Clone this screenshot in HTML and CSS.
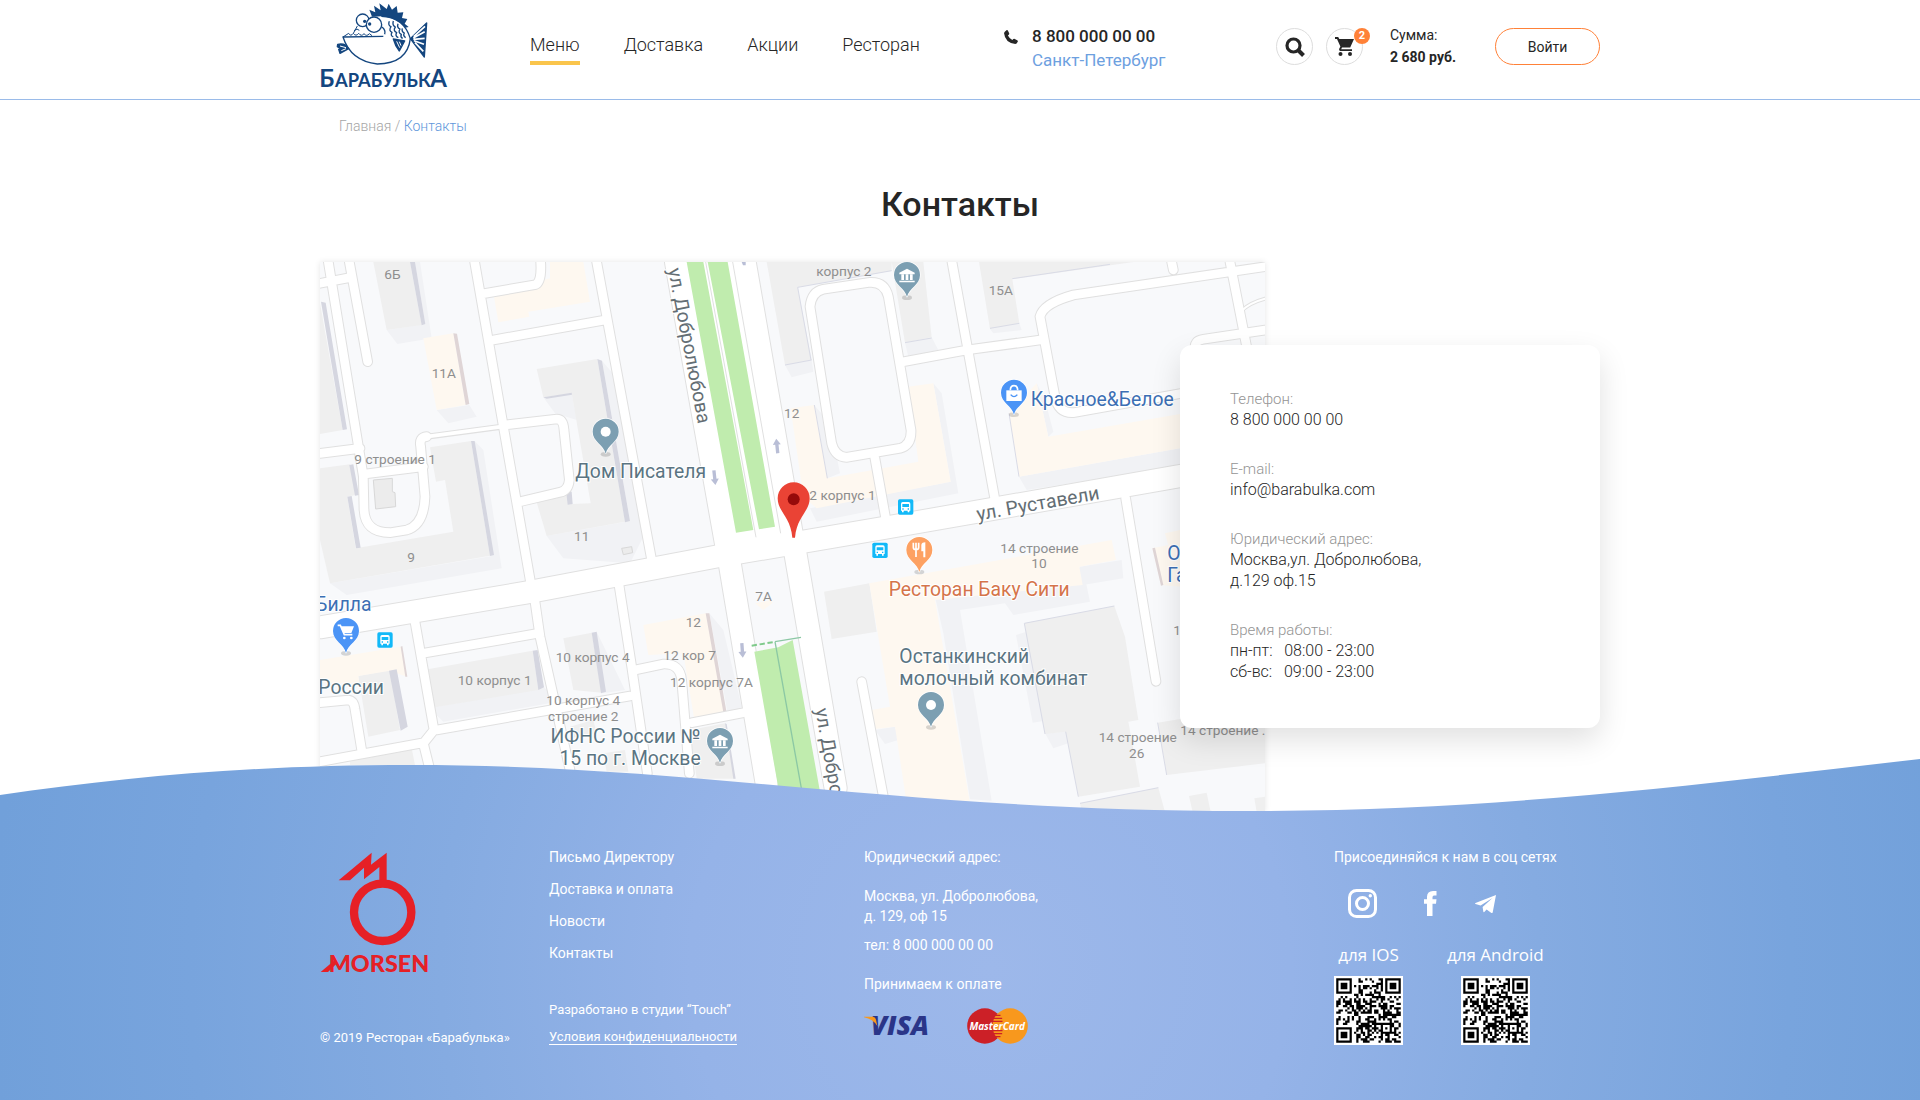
FILE: index.html
```html
<!DOCTYPE html>
<html lang="ru">
<head>
<meta charset="utf-8">
<meta name="viewport" content="width=device-width, initial-scale=1">
<title>Контакты — Барабулька</title>
<link rel="stylesheet" href="styles.css">
</head>
<body>
<header class="header">
  <div class="container header-row">
    <a class="logo" href="#" aria-label="Барабулька">
      <svg viewBox="60 10 387 255" width="129" height="85">
        <g fill="none" stroke="#14467f" stroke-width="4" stroke-linejoin="round">
          <path fill="#14467f" stroke="none" d="M216 51L208 30L226 38L222 18L242 32L238 11L260 28L266 12L276 30L290 19L293 39L310 38L306 55L322 58L314 72L326 82L316 84Q292 55 244 50Z"/>
          <path d="M244 50Q312 52 331 117Q322 192 232 193Q152 184 129 112L250 110"/>
          <path d="M129 112L146 101Q152 112 160 101Q168 112 176 101Q184 112 192 102Q200 112 208 102L216 108M160 101L172 79M162 93Q172 84 178 92" stroke-width="3"/>
          <circle cx="188" cy="62" r="19" fill="#fff"/>
          <circle cx="222" cy="75" r="23" fill="#fff"/>
          <circle cx="194" cy="65" r="5" fill="#14467f" stroke="none"/>
          <circle cx="209" cy="73" r="5" fill="#14467f" stroke="none"/>
          <path d="M331 117L380 70L373 172Z" fill="#14467f"/>
          <path d="M341 111L375 80M340 115L374 96M340 119L374 116M342 123L372 134M345 129L370 155" stroke="#fff" stroke-width="5"/>
          <path d="M113 134Q126 131 137 136L146 147L120 161L116 149L122 147L112 141Z" fill="#14467f"/>
          <path d="M120 139L138 144M124 153L138 147" stroke="#fff" stroke-width="3"/>
          <path d="M280 118L314 124L298 154Q286 140 280 118Z" fill="#14467f"/>
          <path d="M290 125L299 144M298 126L303 138" stroke="#fff" stroke-width="3"/>
          <path d="M268 65q-5 12 5 16q-8 12 3 17q-6 10 4 14M280 64q-4 13 6 18q-8 11 4 17q-6 10 5 15M294 72q-4 12 6 16q-7 11 4 16q-4 8 4 12M307 86q-3 10 6 14q-5 8 4 14M246 82Q258 92 254 104" stroke-width="4"/>
        </g>
        <g class="logo-text">
          <text x="58" y="261" class="logo-big">Б</text>
          <text x="105" y="261" class="logo-small">АРАБУЛЬК</text>
          <text x="391" y="261" class="logo-big">А</text>
        </g>
      </svg>
    </a>
    <nav class="nav">
      <a class="nav-link nav-active" href="#">Меню</a>
      <a class="nav-link" href="#">Доставка</a>
      <a class="nav-link" href="#">Акции</a>
      <a class="nav-link" href="#">Ресторан</a>
    </nav>
    <div class="phone">
      <svg class="phone-icon" viewBox="0 0 14 14" width="14" height="14"><path fill="#262626" d="M1 1.500L2.800 0L3.700.3L5.300 3.600L5 4.600L3.900 5.500Q5.300 8.400 8.300 9.900L9.300 8.900L10.300 8.700L13.600 10.600L13.900 11.600L12.600 13.400L11.300 14Q1 12.800 0 3Z"/></svg>
      <div>
        <a class="phone-number" href="tel:88000000000">8 800 000 00 00</a>
        <a class="city" href="#">Санкт-Петербург</a>
      </div>
    </div>
    <div class="actions">
      <button class="round" type="button" aria-label="Поиск">
        <svg viewBox="0 0 20 20" width="20" height="20" fill="none" stroke="#262626"><circle cx="8.500" cy="8.500" r="6.500" stroke-width="3.200"/><path d="M13 13L18.500 18.500" stroke-width="4"/></svg>
      </button>
      <button class="round" type="button" aria-label="Корзина">
        <svg viewBox="0 0 20 20" width="20" height="20" fill="#262626"><path d="M0 0H3.200L4.300 2H19L15.200 10.500H7L6.200 12.200H17V14H5Q3.600 13.400 4.200 11.800L5.400 9.600L2 2H0Z"/><circle cx="5.500" cy="17" r="2"/><circle cx="15" cy="17" r="2"/></svg>
        <span class="badge">2</span>
      </button>
      <div class="sum">Сумма:<strong>2 680 руб.</strong></div>
      <button class="login" type="button">Войти</button>
    </div>
  </div>
</header>

<main class="container">
  <nav class="crumbs"><a href="#">Главная</a> / <a class="crumb-current" href="#">Контакты</a></nav>
  <h1>Контакты</h1>
  <section class="contacts">
    <svg class="map" viewBox="30 36 2835 1650" role="img" aria-label="Карта">
      <defs>
        <path id="pin" d="M0 66C-5 40-39 30-39 0A39 39 0 1 1 39 0C39 30 5 40 0 66Z"/>
        <g id="bank" fill="#fff"><path d="M-23-7L0-19L23-7V-2H-23Z"/><path d="M-17-2h8v17h-8zM-4-2h8v17h-8zM9-2h8v17h-8zM-23 17h46v5h-46z"/></g>
        <g id="bus"><rect x="-23" y="-23" width="46" height="46" rx="5" fill="#12b9f8"/><path fill="#fff" fill-rule="evenodd" d="M-14-10Q-14-15-9-15H9Q14-15 14-10V11H11V16H6V11H-6V16H-11V11H-14ZM-10-9V0H10V-9ZM-10 4v4h4v-4zM6 4v4h4v-4z"/></g>
        <path id="arrow" d="M0-22L12-4H5V22H-5V-4H-12Z" fill="#b9bed6"/>
        <g id="streets">
          <path d="M55 36L160 680L162 780Q166 848 240 848L290 840Q342 825 345 740L332 590Q326 562 350 560M118 36L173 335M30 100L125 82M30 610L150 595M165 672L340 650"/>
          <path d="M494 36L664 1010M675 1055L690 1160L780 1560M860 36L1024 925M927 1005L965 1250L1012 1570M550 270L885 210M515 132L676 104Q696 96 692 36M585 525L740 507Q760 507 762 540L778 690Q775 722 750 727L630 755"/>
          <path d="M1500 170Q1505 125 1540 118L1680 97Q1725 95 1735 140L1803 540Q1805 585 1770 595L1610 622Q1575 620 1565 580L1500 170M1693 615L1728 810M1926 36L2055 750M1780 335L1970 300L2190 270"/>
          <path d="M2865 50L2290 135Q2200 160 2190 200L2235 440Q2245 490 2290 488L2700 415M2760 36L2810 290M2585 36L2590 60M2865 240L2680 268Q2650 272 2655 300M2447 745L2538 1294M1655 1295L1722 1650"/>
          <path d="M314 1110L372 1440L340 1480L360 1560M30 1535L340 1478M30 1358L115 1350Q132 1352 135 1378L155 1500M340 1210L685 1150M380 1440L960 1338M975 1260L1060 1242Q1110 1240 1115 1290L1138 1570M1145 1418L1300 1388"/>
        </g>
        <g id="avenues">
          <path d="M30 1132L648 1028L1228 918L1710 836L2600 680L2865 635"/>
          <path d="M1098 36L1246 870L1260 945L1370 1600M1304 36L1445 850L1457 915L1577 1615"/>
        </g>
      </defs>
      <path fill="#f8f9fb" d="M30 36H2865V1686H30Z"/>
      <g fill="#f1f2f5">
        <path d="M230 240L346 222L365 265L262 282ZM380 480L478 465L500 500L415 520ZM315 36H330L365 265L346 222ZM876 332L925 390L1000 860L960 940L760 925L710 858L960 813ZM60 1000L550 917L575 955L110 1035ZM700 442L785 430L800 510L735 490ZM494 573L520 600L575 955L540 917Z"/>
        <path d="M1425 345L1505 330L1510 365L1445 382ZM1785 278L1865 262L1885 300L1795 320ZM2040 237L2128 220L2135 240L2050 250ZM1515 468L1560 520L1590 670L1552 685ZM1870 400L1895 430L1945 730L1520 815L1500 775L1922 695ZM2180 400L2205 450L2230 545L2215 560ZM2127 680L2610 595V650L2150 720Z"/>
        <path d="M1875 1040L2318 950L2340 1055L2110 1095L2085 1060L1950 1080L2045 1652L1980 1648L1900 1150ZM1695 1440L1755 1430L1765 1470L1725 1482ZM2118 1155L2150 1145L2205 1412L2168 1418ZM2205 1450L2267 1445L2275 1480L2230 1495ZM358 1375L702 1312L745 1355L400 1415ZM860 1145L945 1320L880 1330ZM1198 1090L1240 1140L1295 1370L1255 1400ZM2310 950L2435 930L2440 985L2318 1005Z"/>
      </g>
      <g fill="#efefef">
        <path d="M190 36H300L335 225L230 240ZM30 160L98 540L30 552ZM680 357L862 327L945 815L710 858L675 740L770 720L785 762L842 760L785 430L700 442Z"/>
        <path d="M360 592L483 573L540 917L60 1000L30 870V655L120 643L137 735L112 740L137 895L430 845L405 690L378 695Z"/>
        <path d="M1370 36H1745V62L1463 112L1505 330L1425 345ZM1745 36H1840L1865 262L1785 278ZM2007 36H2470L2107 88L2128 220L2040 237Z"/>
        <path d="M1542 1025L1678 1000L1700 1145L1565 1167ZM2143 1120L2413 1068L2445 1160L2485 1410L2455 1415L2490 1610L2305 1640L2267 1445L2205 1452ZM2310 1660L2545 1613L2565 1686H2315ZM2543 1418L2865 1365V1540L2570 1575ZM2637 1638L2690 1628L2702 1686H2648ZM2833 1645L2865 1640V1686H2840Z"/>
        <path d="M760 1165L845 1148L875 1328L790 1320ZM340 1260L668 1202L685 1320L358 1375ZM145 1278L240 1260L270 1440L175 1460ZM1140 1440L1245 1420L1275 1586H1160ZM880 1510L945 1500L955 1565H890ZM120 1528L305 1495L315 1545H120ZM780 1430L850 1410L860 1450L780 1465Z"/>
      </g>
      <g fill="#fef8f0">
        <path d="M550 128L720 85V36H820L840 155L655 185L658 200L565 217Z"/>
        <path d="M340 265L430 250L467 465L380 480ZM1442 475L1513 465L1552 685L1825 635L1795 410L1870 400L1922 695L1520 775L1480 740ZM2097 490L2180 400L2215 560L2610 492V595L2127 680Z"/>
        <path d="M1678 1000L2405 870L2418 930L2308 950L2318 1005L1875 1050L1980 1660H1790L1755 1430L1695 1437L1685 1380L1740 1370ZM2565 850L2610 840V1010L2553 1005L2527 895L2575 885Z"/>
        <path d="M1000 1125L1187 1090L1250 1405L1155 1422L1120 1210L1015 1215ZM30 1230L272 1190L290 1280L240 1262L145 1278L148 1300H30ZM1335 1060L1385 1050L1387 1060L1360 1080Z"/>
      </g>
      <g fill="#d5d6e0">
        <path d="M300 36H315L346 222L335 226ZM33 155L47 158L111 538L98 540ZM862 327L876 332L960 813L945 817ZM768 720L785 725L788 762L773 764ZM700 442L785 428L786 434L710 446ZM483 573H494L552 915L540 918ZM118 645L130 643L147 735L135 737ZM112 740L125 738L152 893L138 895Z"/>
        <path d="M845 1148L860 1145L888 1325L873 1330ZM668 1202L683 1200L702 1312L685 1320ZM237 1262L260 1258L293 1430L272 1442ZM1245 1420L1250 1422L1277 1586H1270Z"/>
      </g>
      <path fill="#dfd5d6" d="M430 250L441 251L478 462L467 465ZM1187 1090L1198 1090L1252 1400L1243 1403ZM272 1190L277 1188L292 1280L286 1280ZM2527 895L2535 893L2560 1005L2553 1007Z"/>
      <path fill="none" stroke="#d9dbe6" stroke-width="3" d="M1505 330L1425 345M1463 112L1745 62M1463 112L1503 330M1785 278L1865 264M2107 86L2400 43M2040 235L2128 220M2097 490L2127 680M1513 465L1552 685M2143 1120L2413 1068M2143 1120L2205 1452M2267 1445L2305 1640M2543 1418L2570 1575M2310 1660L2545 1613"/>
      <path fill="#ececec" stroke="#d8d8d8" stroke-width="3" d="M190 690L247 685V725L255 728L257 770L197 777ZM935 895L965 890L968 908L940 914Z"/>
      <g fill="none" stroke="#e0e0e0" stroke-linecap="round">
        <use href="#streets" stroke-width="32"/>
        <path d="M350 560L575 530" stroke-width="18"/>
        <path d="M2795 182Q2820 158 2865 146" stroke-width="12"/>
        <use href="#avenues" stroke-width="72"/>
      </g>
      <g fill="none" stroke="#fff" stroke-linecap="round">
        <use href="#streets" stroke-width="26"/>
        <path d="M350 560L575 530" stroke-width="11"/>
        <path d="M2795 182Q2820 158 2865 146" stroke-width="6"/>
        <use href="#avenues" stroke-width="66"/>
      </g>
      <path fill="#fff" d="M1130 36H1272L1415 858L1275 880Z"/>
      <path fill="#c0ecae" d="M1130 36H1180L1330 840L1278 848ZM1193 36H1253L1395 830L1347 838ZM1333 1205L1405 1192L1448 1170L1530 1625L1406 1620Z"/>
      <path fill="none" stroke="#e0e0e0" stroke-width="3" d="M1187 36L1338 862M1268 36L1412 850"/>
      <path fill="none" stroke="#8cc8a4" stroke-width="4" d="M1395 1175L1475 1620M1395 1175L1473 1162"/>
      <path fill="none" stroke="#7fca8b" stroke-width="6" stroke-dasharray="16 8" d="M1325 1187L1392 1176"/>
      <use href="#arrow" transform="translate(1401 588) rotate(-6)"/>
      <use href="#arrow" transform="translate(1214 683) rotate(174)"/>
      <use href="#arrow" transform="translate(1297 1201) rotate(176)"/>
      <path fill="#b9bed6" d="M1295 36h12v10h-8z"/>

      <g class="map-small">
        <text x="223" y="87">6Б</text><text x="365" y="384">11А</text><text x="133" y="642">9 строение 1</text>
        <text x="792" y="872">11</text><text x="292" y="935">9</text><text x="1519" y="78">корпус 2</text>
        <text x="2036" y="135">15А</text><text x="1422" y="504">12</text><text x="1498" y="750">2 корпус 1</text>
        <text x="1336" y="1053">7А</text><text x="1127" y="1131">12</text><text x="1060" y="1231">12 кор 7</text>
        <text x="1080" y="1312">12 корпус 7А</text><text x="737" y="1236">10 корпус 4</text><text x="443" y="1305">10 корпус 1</text>
        <text x="709" y="1365">10 корпус 4</text><text x="714" y="1413">строение 2</text>
        <text x="2071" y="909">14 строение</text><text x="2164" y="955">10</text>
        <text x="2366" y="1477">14 строение</text><text x="2457" y="1524">26</text>
        <text x="2611" y="1456">14 строение .</text><text x="2590" y="1155">1</text>
      </g>
      <g class="map-place">
        <text x="796" y="684">Дом Писателя</text><text x="25" y="1333">России</text>
        <text x="1172" y="1480" text-anchor="end">ИФНС России №</text><text x="1172" y="1545" text-anchor="end">15 по г. Москве</text>
        <text x="1768" y="1239">Останкинский</text><text x="1768" y="1305">молочный комбинат</text>
      </g>
      <g class="map-place map-shop">
        <text x="2162" y="467">Красное&amp;Белое</text><text x="16" y="1082">Билла</text>
        <text x="2572" y="929">О</text><text x="2572" y="996">Га</text>
      </g>
      <text class="map-place map-food" x="1736" y="1038">Ресторан Баку Сити</text>
      <g class="map-place map-street">
        <text transform="translate(1074 58) rotate(79)">ул. Добролюбова</text>
        <text transform="translate(2003 812) rotate(-10)">ул. Руставели</text>
        <text transform="translate(1516 1378) rotate(80)">ул. Добролюбова</text>
      </g>

      <g fill="#000" fill-opacity=".15">
        <ellipse cx="887" cy="613" rx="15" ry="7"/><ellipse cx="1791" cy="143" rx="15" ry="7"/><ellipse cx="2112" cy="494" rx="15" ry="7"/><ellipse cx="108" cy="1210" rx="15" ry="7"/><ellipse cx="1230" cy="1541" rx="15" ry="7"/><ellipse cx="1828" cy="966" rx="15" ry="7"/><ellipse cx="1863" cy="1432" rx="15" ry="7"/>
      </g>
      <g stroke="#fff" stroke-width="4" paint-order="stroke">
        <g fill="#7c9fb2"><use href="#pin" x="887" y="545"/><use href="#pin" x="1791" y="75"/><use href="#pin" x="1230" y="1473"/><use href="#pin" x="1863" y="1365"/></g>
        <g fill="#4b94f6"><use href="#pin" x="2112" y="428"/><use href="#pin" x="108" y="1143"/></g>
        <use href="#pin" x="1828" y="900" fill="#fda162"/>
      </g>
      <circle cx="887" cy="545" r="15" fill="#fff"/><circle cx="1863" cy="1365" r="15" fill="#fff"/>
      <use href="#bank" x="1791" y="75"/><use href="#bank" x="1230" y="1473"/>
      <path fill="#fff" d="M2089 421h46v32h-46z"/>
      <path fill="none" stroke="#fff" stroke-width="5" d="M2101 421Q2101 407 2112 407Q2123 407 2123 421"/>
      <path fill="none" stroke="#4b94f6" stroke-width="4" d="M2102 434Q2112 446 2122 434"/>
      <path fill="none" stroke="#fff" stroke-width="5" d="M83 1126H91L103 1154H127"/>
      <path fill="#fff" d="M92 1129H132L124 1149H101Z"/><circle cx="103" cy="1164" r="4" fill="#fff"/><circle cx="124" cy="1164" r="4" fill="#fff"/>
      <path fill="none" stroke="#fff" stroke-width="5" d="M1810 878v14q0 7 8 7q8 0 8-7v-14M1818 878v43"/>
      <path fill="#fff" d="M1834 884Q1836 877 1846 877V922H1840V904H1834Z"/>
      <use href="#bus" x="225" y="1170"/><use href="#bus" x="1787" y="771"/><use href="#bus" x="1710" y="901"/>
      <path fill="#ea4335" d="M1451 697A48 48 0 0 1 1499 745C1499 785 1460 800 1455 863H1447C1442 800 1403 785 1403 745A48 48 0 0 1 1451 697Z"/>
      <circle cx="1451" cy="748" r="18" fill="#960a0a"/>
    </svg>
    <dl class="card">
      <div><dt>Телефон:</dt><dd>8 800 000 00 00</dd></div>
      <div><dt>E-mail:</dt><dd><a href="mailto:info@barabulka.com">info@barabulka.com</a></dd></div>
      <div><dt>Юридический адрес:</dt><dd>Москва,ул. Добролюбова,<br>д.129 оф.15</dd></div>
      <div><dt>Время работы:</dt><dd>пн-пт: &nbsp; 08:00 - 23:00<br>сб-вс: &nbsp; 09:00 - 23:00</dd></div>
    </dl>
  </section>
</main>

<footer class="footer">
  <svg class="wave" viewBox="0 0 1920 341" preserveAspectRatio="none" aria-hidden="true">
    <defs>
      <radialGradient id="sea" gradientUnits="userSpaceOnUse" cx="990" cy="210" r="1000">
        <stop offset="0" stop-color="#9db8ea"/><stop offset=".3" stop-color="#95b3e8"/><stop offset=".55" stop-color="#85abe1"/><stop offset=".8" stop-color="#78a4dd"/><stop offset="1" stop-color="#71a0da"/>
      </radialGradient>
    </defs>
    <path fill="url(#sea)" d="M0 36C130 17 260 6 410 6C700 6 900 52 1245 52C1500 52 1700 25 1920 0V341H0Z"/>
  </svg>
  <div class="container footer-row">
    <div class="foot-brand">
      <svg class="brand-mark" viewBox="60 65 327 363" width="109" height="121" role="img" aria-label="Morsen">
        <g fill="#e62026">
          <path d="M116 150L215 67L213 103L260 67V152H238V110L192 147V112L150 150Z"/>
          <circle cx="248" cy="246" r="86" fill="none" stroke="#e62026" stroke-width="25"/>
          <path d="M62 425L108 386V402L84 425Z"/>
        </g>
        <text class="morsen" x="86" y="425">MORSEN</text>
      </svg>
      <p class="small">© 2019 Ресторан «Барабулька»</p>
    </div>
    <div class="foot-links">
      <ul>
        <li><a href="#">Письмо Директору</a></li>
        <li><a href="#">Доставка и оплата</a></li>
        <li><a href="#">Новости</a></li>
        <li><a href="#">Контакты</a></li>
      </ul>
      <div class="legal">
        <span>Разработано в студии “Touch”</span>
        <a href="#">Условия конфиденциальности</a>
      </div>
    </div>
    <div class="foot-address">
      <p>Юридический адрес:</p>
      <address>Москва, ул. Добролюбова,<br>д. 129, оф 15</address>
      <p class="tel">тел: 8 000 000 00 00</p>
      <p class="pay-title">Принимаем к оплате</p>
      <div class="pay">
        <svg viewBox="69 560 198 64" width="66" height="22" role="img" aria-label="Visa">
          <text class="visa" x="89" y="620">VISA</text>
          <path fill="#f7981d" d="M69 564H96Q104 565 105 573L109 592Q96 571 69 566Z"/>
        </svg>
        <svg viewBox="380 536 182 108" width="61" height="36" role="img" aria-label="MasterCard">
          <circle cx="433" cy="590" r="53" fill="#cc2027"/><circle cx="509" cy="590" r="53" fill="#f8981d"/>
          <path stroke="#cc2027" stroke-width="4" d="M464 558H480M458 567H485M456 576H486M456 604H486M458 613H485M463 622H480"/>
          <text class="mastercard" x="470" y="602" text-anchor="middle">MasterCard</text>
        </svg>
      </div>
    </div>
    <div class="foot-social">
      <p>Присоединяйся к нам в соц сетях</p>
      <div class="social">
        <a href="#" aria-label="Instagram"><svg viewBox="0 0 29 29" width="29" height="29" fill="none" stroke="#fff" stroke-width="3"><rect x="1.500" y="1.500" width="26" height="26" rx="7"/><circle cx="14.500" cy="14.500" r="6"/><circle cx="22.300" cy="6.700" r="1.700" fill="#fff" stroke="none"/></svg></a>
        <a href="#" aria-label="Facebook"><svg viewBox="0 0 13 25" width="13" height="25"><path fill="#fff" d="M12.500 0V4.500H10Q8.500 4.600 8.500 6.200V8.300H12.500L12 12.700H8.500V25H3V12.700H0V8.300H3V5.500Q3.200.3 9 0Z"/></svg></a>
        <a href="#" aria-label="Telegram"><svg viewBox="0 0 21 18" width="21" height="18"><path fill="#fff" d="M21 0L17.700 17.500Q17.300 18.300 16.400 17.900L11.600 14.400L9.300 17Q8.500 17.500 8.300 16.500L7.600 12L17.500 3L5.600 10.600L.5 9Q-.4 8.600.5 8Z"/></svg></a>
      </div>
      <div class="apps">
        <div class="app"><span>для IOS</span><svg class="qr" viewBox="-1 -1 31 31" role="img" aria-label="QR-код для IOS"></svg></div>
        <div class="app"><span>для Android</span><svg class="qr" viewBox="-1 -1 31 31" role="img" aria-label="QR-код для Android"></svg></div>
      </div>
    </div>
  </div>
</footer>
<script src="qr.js"></script>
</body>
</html>
```
FILE: styles.css
```css
* { box-sizing: border-box; }
body {
  margin: 0;
  background: #fff;
  color: #262626;
  font-family: Roboto, "Liberation Sans", sans-serif;
  font-size: 16px;
  font-weight: 300;
}
a { color: inherit; text-decoration: none; }
p, dl, dd, ul, h1 { margin: 0; padding: 0; }
button { font: inherit; color: inherit; background: #fff; padding: 0; cursor: pointer; }
svg { display: block; }
.container { width: 100%; max-width: 1280px; margin: 0 auto; }

.header { border-bottom: 1px solid #9abbe9; }
.header-row { display: grid; grid-template-columns: 210px 474px 272px 1fr; min-height: 99px; }
.logo { padding-top: 3px; }
.logo svg, .brand-mark, .pay svg { overflow: visible; }
.logo-text { fill: #14467f; font-family: Lato, sans-serif; font-weight: 700; }
.logo-big { font-size: 72px; }
.logo-small { font-size: 55px; }
.nav { display: flex; gap: 44px; align-items: flex-start; padding-top: 32px; }
.nav-link { font-size: 18px; line-height: 26px; padding-bottom: 3px; }
.nav-active { border-bottom: 4px solid #fac54c; }
.phone { display: flex; gap: 14px; padding-top: 24px; }
.phone-icon { margin-top: 6px; }
.phone-number, .city { display: block; line-height: 24px; }
.phone-number { font-size: 17px; font-weight: 500; }
.city { color: #6da0df; font-size: 17px; font-weight: 400; }
.actions { display: flex; align-items: flex-start; gap: 13px; padding-top: 28px; }
.round {
  position: relative;
  display: grid;
  place-items: center;
  width: 37px;
  height: 37px;
  border: 1px solid #ddd;
  border-radius: 50%;
}
.badge {
  position: absolute;
  top: -1px;
  right: -8px;
  width: 16px;
  height: 16px;
  border-radius: 50%;
  background: #ff8138;
  color: #fff;
  font-size: 11px;
  font-weight: 700;
  line-height: 16px;
}
.sum { margin: -4px 0 0 14px; font-size: 14px; line-height: 22px; font-weight: 400; }
.sum strong { display: block; font-weight: 700; }
.login {
  width: 105px;
  height: 37px;
  margin-left: auto;
  border: 1px solid #ff8138;
  border-radius: 19px;
  font-size: 14px;
  font-weight: 400;
}

.crumbs { padding: 16px 0 0 19px; font-size: 14px; line-height: 20px; color: #a5a5a5; }
.crumb-current { color: #6096db; }
h1 { padding-top: 46px; font-size: 34px; line-height: 44px; font-weight: 500; text-align: center; }

.contacts { display: grid; grid-template-columns: 860px 85px 1fr; padding-top: 36px; }
.map {
  grid-area: 1 / 1 / 2 / 3;
  width: 100%;
  height: auto;
  box-shadow: 0 0 6px rgba(0, 0, 0, .1);
}
.map-small { font-size: 41px; font-weight: 400; fill: #8e8e8e; }
.map-place {
  font-size: 58px;
  font-weight: 400;
  fill: #5a7482;
  stroke: #fff;
  stroke-width: 6px;
  paint-order: stroke;
}
.map-shop { fill: #3c6fb4; }
.map-food { fill: #d5744a; }
.map-street { fill: #646e74; }
.card {
  grid-area: 1 / 2 / 2 / 4;
  align-self: start;
  display: flex;
  flex-direction: column;
  gap: 29px;
  min-height: 383px;
  margin-top: 83px;
  padding: 44px 50px 40px;
  border-radius: 12px;
  background: #fff;
  box-shadow: 0 12px 30px rgba(0, 0, 0, .12);
  position: relative;
}
.card dt { font-size: 15px; line-height: 20px; color: #949494; }
.card dd { font-size: 16px; line-height: 21px; }

.footer { position: relative; margin-top: -53px; min-height: 341px; color: #fff; font-size: 14px; font-weight: 400; }
.wave { position: absolute; inset: 0; width: 100%; height: 100%; }
.footer-row { position: relative; display: grid; grid-template-columns: 229px 315px 470px 1fr; padding: 88px 0 50px; }
.foot-brand { display: flex; flex-direction: column; justify-content: space-between; padding-top: 5px; }
.small, .legal { font-size: 13px; line-height: 20px; }
.foot-brand .small { line-height: 15px; }
.foot-links { display: flex; flex-direction: column; justify-content: space-between; }
.foot-links ul { list-style: none; display: grid; gap: 12px; line-height: 20px; }
.legal { display: grid; gap: 9px; justify-items: start; }
.legal a { line-height: 15px; border-bottom: 1px solid #fff; }
.foot-address p, address, .foot-social p { line-height: 20px; }
address { padding-top: 19px; font-style: normal; }
.foot-address .tel { padding-top: 9px; }
.foot-address .pay-title { padding-top: 19px; }
.foot-address .pay { display: flex; align-items: center; gap: 37px; padding-top: 14px; }
.visa { font: italic 900 80px "Open Sans", sans-serif; fill: #2a3588; }
.mastercard { font: italic 700 30px "Open Sans", sans-serif; fill: #fff; }
.morsen { font: 900 70px Lato, sans-serif; fill: #e62026; }
.social { display: grid; grid-template-columns: 76px 51px 21px; align-items: center; padding: 22px 0 0 14px; }
.apps { display: flex; gap: 44px; padding-top: 23px; }
.app { display: grid; justify-items: center; gap: 7px; font: 17px/28px "Open Sans", sans-serif; }
.qr { width: 69px; height: 69px; background: #fff; }
```
FILE: qr.js
```js
// Builds a 29×29 code: three finder squares, one alignment square, data modules.
const SIZE = 29;

function ring(x, y, cx, cy) {
  return Math.max(Math.abs(x - cx), Math.abs(y - cy));
}

function isDark(x, y, bit) {
  for (const [cx, cy] of [[3, 3], [25, 3], [3, 25]]) {
    const d = ring(x, y, cx, cy);
    if (d <= 4) return d === 3 || d <= 1;
  }
  const d = ring(x, y, 22, 22);
  if (d <= 2) return d !== 1;
  return bit;
}

document.querySelectorAll('.qr').forEach((svg) => {
  let seed = 20190;
  let d = '';
  for (let y = 0; y < SIZE; y++) {
    for (let x = 0; x < SIZE; x++) {
      seed = (seed * 1103515245 + 12345) % 2147483648;
      if (isDark(x, y, (seed / 2147483648) > 0.48)) d += `M${x} ${y}h1v1h-1z`;
    }
  }
  const path = document.createElementNS('http://www.w3.org/2000/svg', 'path');
  path.setAttribute('d', d);
  svg.append(path);
});
```
